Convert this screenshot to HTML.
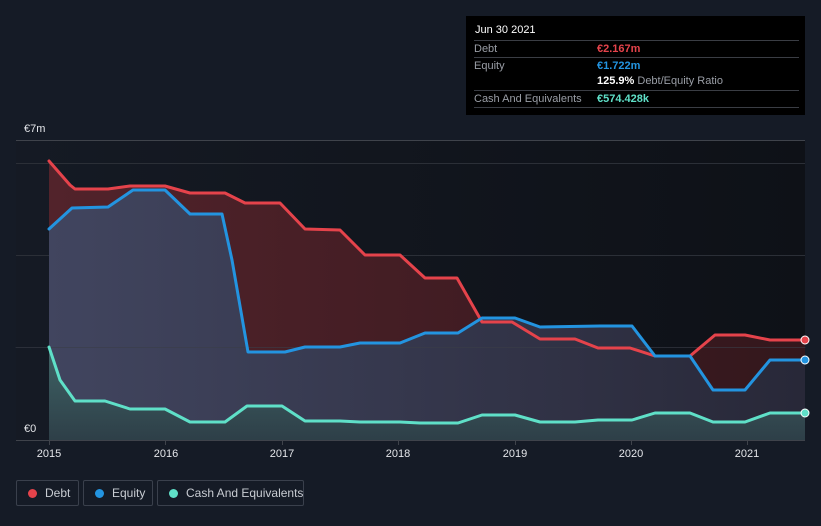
<!DOCTYPE html>
<html><head><meta charset="utf-8"><style>
html,body{margin:0;padding:0;background:#151b26;width:821px;height:526px;overflow:hidden;font-family:"Liberation Sans",sans-serif;}
.tt{position:absolute;left:466px;top:16px;width:339px;height:99px;background:#000;color:#fff;font-size:11px;}
.tt .r{position:absolute;left:8px;right:6px;border-top:1px solid #3a3d44;height:16px;line-height:16px;white-space:nowrap;}
.lab{color:#9a9ea6;}
.v{position:absolute;left:123px;top:0;font-weight:bold;}
.lg{position:absolute;top:480px;height:26px;border:1px solid #3a404c;border-radius:2px;color:#c8ccd2;font-size:12px;line-height:25px;box-sizing:border-box;white-space:nowrap;}
.lg i{position:absolute;left:11px;top:8px;width:9px;height:9px;border-radius:50%;}
.lg span{position:absolute;left:28px;}
</style></head><body>
<svg width="821" height="526" style="position:absolute;left:0;top:0">
<defs>
<linearGradient id="bg" x1="0" x2="1"><stop offset="0" stop-color="#151a24"/><stop offset="1" stop-color="#0e1117"/></linearGradient>
<linearGradient id="df" x1="0" x2="1"><stop offset="0" stop-color="#52232b"/><stop offset="1" stop-color="#33171c"/></linearGradient>
<linearGradient id="ef" x1="0" x2="1"><stop offset="0" stop-color="#41455f"/><stop offset="1" stop-color="#282838"/></linearGradient>
<linearGradient id="cf" x1="0" y1="0" x2="0" y2="1"><stop offset="0" stop-color="#3f6466"/><stop offset="1" stop-color="#2e3f48"/></linearGradient>
</defs>
<rect x="16" y="140" width="789" height="300" fill="url(#bg)"/>
<line x1="16" y1="140.5" x2="805" y2="140.5" stroke="#3f434b"/>
<line x1="16" y1="163.5" x2="805" y2="163.5" stroke="#2b2f37"/>
<line x1="16" y1="255.5" x2="805" y2="255.5" stroke="#2b2f37"/>
<g stroke-linejoin="round" stroke-linecap="round">
<polygon fill="url(#df)" points="49,161 70,185 75,189 108,189 130,186 165,186 190,193 225,193 245,203 280,203 305,229 340,230 365,255 400,255 425,278 457,278 482,322 512,322 540,339 575,339 598,348 630,348 655,356 690,356 715,335 745,335 770,340 805,340 805,440 49,440"/>
<polygon fill="url(#ef)" points="49,229 72,208 108,207 133,190 165,190 190,214 222,214 232,260 248,352 285,352 305,347 340,347 360,343 400,343 425,333 458,333 482,318 515,318 540,327 600,326 632,326 655,356 690,356 713,390 745,390 770,360 805,360 805,440 49,440"/>
<line x1="16" y1="347.5" x2="805" y2="347.5" stroke="#3a3e48" stroke-opacity="0.6"/>
<polygon fill="url(#cf)" points="49,347 60,380 75,401 105,401 130,409 165,409 190,422 225,422 247,406 282,406 305,421 340,421 360,422 400,422 420,423 458,423 482,415 515,415 540,422 575,422 598,420 632,420 655,413 690,413 713,422 745,422 770,413 805,413 805,440 49,440"/>
<polyline fill="none" stroke="#e5434b" stroke-width="3" points="49,161 70,185 75,189 108,189 130,186 165,186 190,193 225,193 245,203 280,203 305,229 340,230 365,255 400,255 425,278 457,278 482,322 512,322 540,339 575,339 598,348 630,348 655,356 690,356 715,335 745,335 770,340 805,340"/>
<polyline fill="none" stroke="#2394e0" stroke-width="3" points="49,229 72,208 108,207 133,190 165,190 190,214 222,214 232,260 248,352 285,352 305,347 340,347 360,343 400,343 425,333 458,333 482,318 515,318 540,327 600,326 632,326 655,356 690,356 713,390 745,390 770,360 805,360"/>
<polyline fill="none" stroke="#5fe0c8" stroke-width="3" points="49,347 60,380 75,401 105,401 130,409 165,409 190,422 225,422 247,406 282,406 305,421 340,421 360,422 400,422 420,423 458,423 482,415 515,415 540,422 575,422 598,420 632,420 655,413 690,413 713,422 745,422 770,413 805,413"/>
</g>
<circle cx="805" cy="340" r="4" fill="#e5434b" stroke="#fff" stroke-width="1"/>
<circle cx="805" cy="360" r="4" fill="#2394e0" stroke="#fff" stroke-width="1"/>
<circle cx="805" cy="413" r="4" fill="#5fe0c8" stroke="#fff" stroke-width="1"/>
<line x1="16" y1="440.5" x2="805" y2="440.5" stroke="#3f434b"/>
<g stroke="#3f434b"><line x1="49.5" y1="440" x2="49.5" y2="445"/><line x1="165.5" y1="440" x2="165.5" y2="445"/><line x1="282.5" y1="440" x2="282.5" y2="445"/><line x1="398.5" y1="440" x2="398.5" y2="445"/><line x1="515.5" y1="440" x2="515.5" y2="445"/><line x1="631.5" y1="440" x2="631.5" y2="445"/><line x1="747.5" y1="440" x2="747.5" y2="445"/></g>
<g fill="#e4e6ea" font-size="11" font-family="Liberation Sans,sans-serif" text-anchor="middle">
<text x="49" y="457">2015</text><text x="166" y="457">2016</text><text x="282" y="457">2017</text><text x="398" y="457">2018</text><text x="515" y="457">2019</text><text x="631" y="457">2020</text><text x="747" y="457">2021</text>
</g>
<text x="24" y="132" fill="#e4e6ea" font-size="11" font-family="Liberation Sans,sans-serif">€7m</text>
<text x="24" y="432" fill="#e4e6ea" font-size="11" font-family="Liberation Sans,sans-serif">€0</text>
</svg>
<div class="tt">
<div style="position:absolute;left:9px;top:8px;font-size:11px;">Jun 30 2021</div>
<div class="r" style="top:24px"><span class="lab">Debt</span><span class="v" style="color:#e5434b">€2.167m</span></div>
<div class="r" style="top:41px"><span class="lab">Equity</span><span class="v" style="color:#2394e0">€1.722m</span></div>
<div class="r" style="top:57px;border-top:none"><span class="v" style="color:#fff">125.9% <span class="lab" style="font-weight:normal">Debt/Equity Ratio</span></span></div>
<div class="r" style="top:74px;border-bottom:1px solid #3a3d44"><span class="lab">Cash And Equivalents</span><span class="v" style="color:#5fe0c8">€574.428k</span></div>
</div>
<div class="lg" style="left:16px;width:63px"><i style="background:#e5434b"></i><span>Debt</span></div>
<div class="lg" style="left:83px;width:70px"><i style="background:#2394e0"></i><span>Equity</span></div>
<div class="lg" style="left:157px;width:147px"><i style="background:#5fe0c8"></i><span>Cash And Equivalents</span></div>
</body></html>
